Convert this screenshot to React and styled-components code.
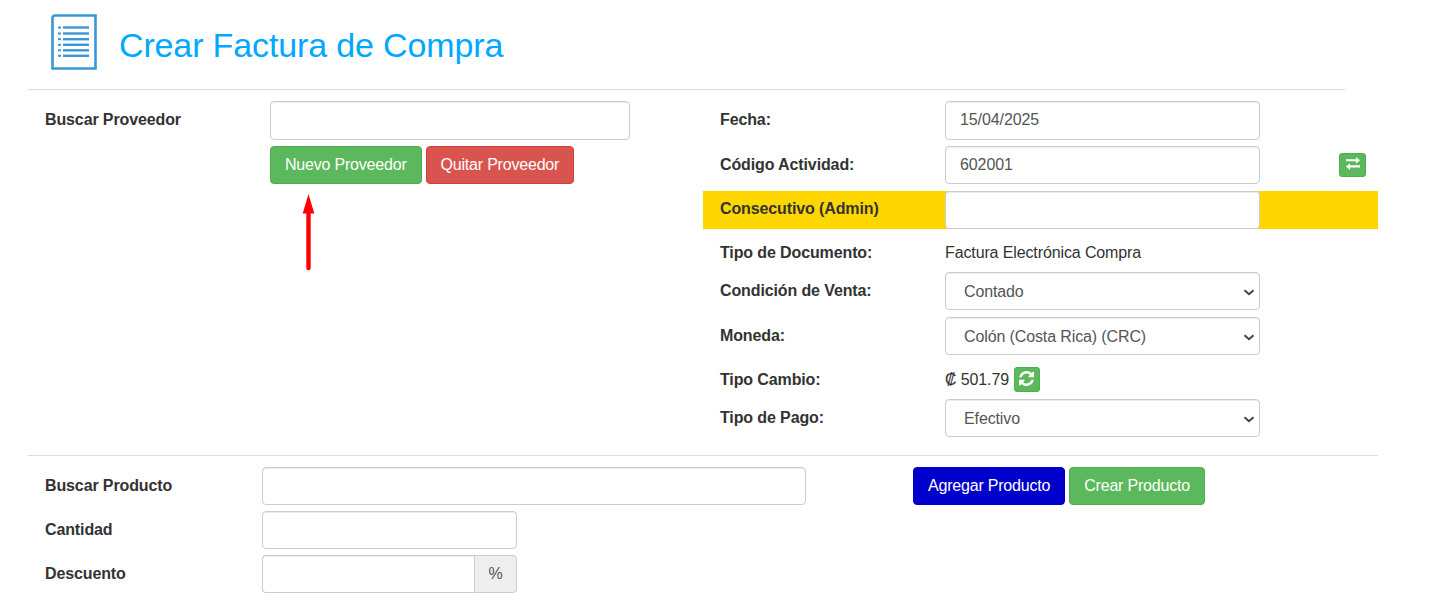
import React from 'react';
import styled, { createGlobalStyle } from 'styled-components';

const Global = createGlobalStyle`
  html, body { margin: 0; padding: 0; background: #fff; }
  body { font-family: "Liberation Sans", Arial, sans-serif; font-size: 16px; color: #333; letter-spacing: -0.12px; }
  * { box-sizing: border-box; }
`;

const Page = styled.div`
  position: relative;
  width: 1444px;
  height: 596px;
  overflow: hidden;
  padding-left: 28px;
`;
const Header = styled.header`
  display: flex;
  align-items: flex-start;
  height: 89px;
  width: 1317px;
  padding: 14px 0 0 23px;
`;
const Title = styled.h1`
  margin: 8px 0 0 22px;
  font-size: 34px;
  line-height: 46px;
  font-weight: 400;
  letter-spacing: -0.14px;
  color: #00a8ff;
`;
const Rule = styled.hr`
  margin: 0;
  border: 0;
  height: 1px;
  background: #ddd;
  width: ${p => p.$width}px;
`;
const Columns = styled.div`
  display: grid;
  grid-template-columns: 675px 675px;
  width: 1350px;
  padding-top: 11px;
  height: 365px;
`;
const LeftColumn = styled.section`
  display: grid;
  grid-template-columns: 225px 360px;
  padding-left: 17px;
  align-content: start;
`;
const RightColumn = styled.section`
  display: flex;
  flex-direction: column;
`;
const Label = styled.label`
  font-weight: 700;
  font-size: 16px;
  line-height: ${p => p.$lh || 38}px;
  color: #333;
`;
const Field = styled.input`
  display: block;
  width: ${p => (p.$width ? `${p.$width}px` : '100%')};
  height: ${p => p.$height || 38}px;
  padding: 6px 14px;
  font: 16px "Liberation Sans", Arial, sans-serif;
  letter-spacing: -0.1px;
  color: #555;
  background: #fff;
  border: 1px solid #ccc;
  border-radius: 4px;
  box-shadow: inset 0 1px 1px rgba(0, 0, 0, .075);
  outline: none;
`;
const DateField = styled(Field)`
  padding-top: 6px;
  padding-bottom: 8px;
`;
const SelectWrap = styled.div`
  position: relative;
  width: 100%;
`;
const Choice = styled.select`
  display: block;
  width: 100%;
  height: 38px;
  padding: 6px 14px 6px 18px;
  font: 16px "Liberation Sans", Arial, sans-serif;
  letter-spacing: -0.12px;
  color: #555;
  background: #fff;
  border: 1px solid #ccc;
  border-radius: 4px;
  box-shadow: inset 0 1px 1px rgba(0, 0, 0, .075);
  outline: none;
  appearance: none;
`;
const ChevronMark = styled.svg`
  position: absolute;
  right: 5px;
  top: 17px;
  pointer-events: none;
`;
const ButtonRow = styled.div`
  display: flex;
  gap: 4px;
  margin-top: 6px;
`;
const tones = {
  green: ['#5cb85c', '#4cae4c'],
  red: ['#d9534f', '#d43f3a'],
  blue: ['#0000cd', '#0000cd'],
};
const Button = styled.button`
  height: 38px;
  padding: 0 14px;
  font: 16px "Liberation Sans", Arial, sans-serif;
  letter-spacing: -0.2px;
  color: #fff;
  background: ${p => tones[p.$tone][0]};
  border: 1px solid ${p => tones[p.$tone][1]};
  border-radius: 4px;
`;
const IconButton = styled.button`
  display: flex;
  align-items: center;
  justify-content: center;
  width: ${p => p.$width}px;
  height: ${p => p.$height}px;
  padding: 0 0 ${p => p.$lift}px;
  color: #fff;
  background: #5cb85c;
  border: 1px solid #4cae4c;
  border-radius: 3px;
`;
const Row = styled.div`
  display: grid;
  grid-template-columns: 225px 315px auto;
  align-items: ${p => p.$align || 'start'};
  height: ${p => p.$height || 38}px;
  padding-left: 17px;
  padding-top: ${p => p.$pad || 0}px;
  margin-top: ${p => p.$top || 0}px;
  background: ${p => (p.$band ? '#ffd700' : 'transparent')};
`;
const Side = styled.div`
  padding-left: 79px;
  padding-top: 7px;
`;
const Value = styled.div`
  display: flex;
  align-items: center;
  gap: 5px;
  line-height: 24px;
  color: #333;
`;
const ProductSection = styled.section`
  display: grid;
  grid-template-columns: 217px 544px auto;
  grid-auto-rows: 38px;
  row-gap: 6px;
  width: 1350px;
  padding: 11px 0 0 17px;
  align-items: start;
`;
const ProductActions = styled.div`
  display: flex;
  gap: 4px;
  margin-left: 107px;
`;
const InputGroup = styled.div`
  display: flex;
  width: 255px;
`;
const GroupField = styled(Field)`
  flex: 1;
  min-width: 0;
  border-radius: 4px 0 0 4px;
  border-right: 0;
`;
const Addon = styled.span`
  display: flex;
  align-items: center;
  justify-content: center;
  width: 43px;
  height: 38px;
  color: #555;
  background: #eee;
  border: 1px solid #ccc;
  border-radius: 0 4px 4px 0;
`;
const Arrow = styled.svg`
  position: absolute;
  left: 299px;
  top: 192px;
`;

const DocIcon = () => (
  <svg width="46" height="56" viewBox="0 0 46 56" style={{ display: 'block', flex: 'none' }}>
    <path d="M1.5 54.5V4a2.5 2.5 0 0 1 2.5-2.5h40.5v53z" fill="#fff" stroke="#3a96d8" strokeWidth="2.6" />
    {[13.5, 19.5, 25.2, 30.8, 36.3, 41.8].map(y => (
      <g key={y} fill="#3a96d8">
        <rect x="7" y={y - 1} width="3" height="2" />
        <rect x="12" y={y - 1.2} width="26" height="2.4" />
      </g>
    ))}
  </svg>
);

const Chevron = () => (
  <ChevronMark width="12" height="7" viewBox="0 0 12 7">
    <path d="M1.5 1.2L6 5.2L10.5 1.2" fill="none" stroke="#444" strokeWidth="2" />
  </ChevronMark>
);

const Select = ({ children }) => (
  <SelectWrap>
    <Choice>{children}</Choice>
    <Chevron />
  </SelectWrap>
);

const SwapIcon = () => (
  <svg width="14" height="13" viewBox="0 0 14 13" style={{ display: 'block' }} fill="#fff">
    <path d="M0 2.2H10V0L14 3.2L10 6.4V4.2H0z" />
    <path d="M14 8.2H4V6.2L0 9.6L4 13V10.4H14z" />
  </svg>
);

const RefreshIcon = () => (
  <svg width="15" height="15" viewBox="0 0 1536 1536" style={{ display: 'block' }} fill="#fff">
    <path d="M1511 928q0 5-1 7-64 268-268 434.5t-478 166.5q-146 0-282.5-55t-243.5-157l-129 129q-19 19-45 19t-45-19-19-45v-448q0-26 19-45t45-19h448q26 0 45 19t19 45-19 45l-137 137q71 66 161 102t187 36q134 0 250-65t186-179q11-17 53-117 8-23 30-23h192q13 0 22.5 9.5t9.5 22.5zm25-800v448q0 26-19 45t-45 19h-448q-26 0-45-19t-19-45 19-45l138-138q-148-137-349-137-134 0-250 65t-186 179q-11 17-53 117-8 23-30 23h-199q-13 0-22.5-9.5t-9.5-22.5v-7q65-268 270-434.5t480-166.5q146 0 284 55.5t245 156.5l130-129q19-19 45-19t45 19 19 45z" />
  </svg>
);

export default function App() {
  return (
    <Page>
      <Global />
      <Header>
        <DocIcon />
        <Title>Crear Factura de Compra</Title>
      </Header>
      <Rule $width={1317} />
      <Columns>
        <LeftColumn>
          <Label>Buscar Proveedor</Label>
          <div>
            <Field $height={39} />
            <ButtonRow>
              <Button $tone="green">Nuevo Proveedor</Button>
              <Button $tone="red">Quitar Proveedor</Button>
            </ButtonRow>
          </div>
        </LeftColumn>
        <RightColumn>
          <Row $height={39}>
            <Label>Fecha:</Label>
            <DateField $height={39} defaultValue="15/04/2025" />
          </Row>
          <Row $top={6}>
            <Label>Código Actividad:</Label>
            <Field defaultValue="602001" />
            <Side>
              <IconButton $width={27} $height={24} $lift={3}><SwapIcon /></IconButton>
            </Side>
          </Row>
          <Row $top={7} $band>
            <Label $lh={36}>Consecutivo (Admin)</Label>
            <Field />
          </Row>
          <Row $height={43} $pad={5} $align="center">
            <Label $lh={24}>Tipo de Documento:</Label>
            <Value>Factura Electrónica Compra</Value>
          </Row>
          <Row>
            <Label>Condición de Venta:</Label>
            <Select><option>Contado</option></Select>
          </Row>
          <Row $top={7}>
            <Label>Moneda:</Label>
            <Select><option>Colón (Costa Rica) (CRC)</option></Select>
          </Row>
          <Row $height={44} $pad={5} $align="center">
            <Label $lh={24}>Tipo Cambio:</Label>
            <Value>
              <span>₡ 501.79</span>
              <IconButton $width={26} $height={25} $lift={2}><RefreshIcon /></IconButton>
            </Value>
          </Row>
          <Row>
            <Label>Tipo de Pago:</Label>
            <Select><option>Efectivo</option></Select>
          </Row>
        </RightColumn>
      </Columns>
      <Rule $width={1350} />
      <ProductSection>
        <Label>Buscar Producto</Label>
        <Field />
        <ProductActions>
          <Button $tone="blue">Agregar Producto</Button>
          <Button $tone="green">Crear Producto</Button>
        </ProductActions>
        <Label>Cantidad</Label>
        <Field $width={255} />
        <span />
        <Label>Descuento</Label>
        <InputGroup>
          <GroupField />
          <Addon>%</Addon>
        </InputGroup>
      </ProductSection>
      <Arrow width="19" height="80" viewBox="0 0 19 80">
        <path d="M9.5 20V76" stroke="#f00" strokeWidth="4.4" strokeLinecap="round" />
        <path d="M3.7 21.5L9.5 2L15.3 21.5Z" fill="#f00" />
      </Arrow>
    </Page>
  );
}
